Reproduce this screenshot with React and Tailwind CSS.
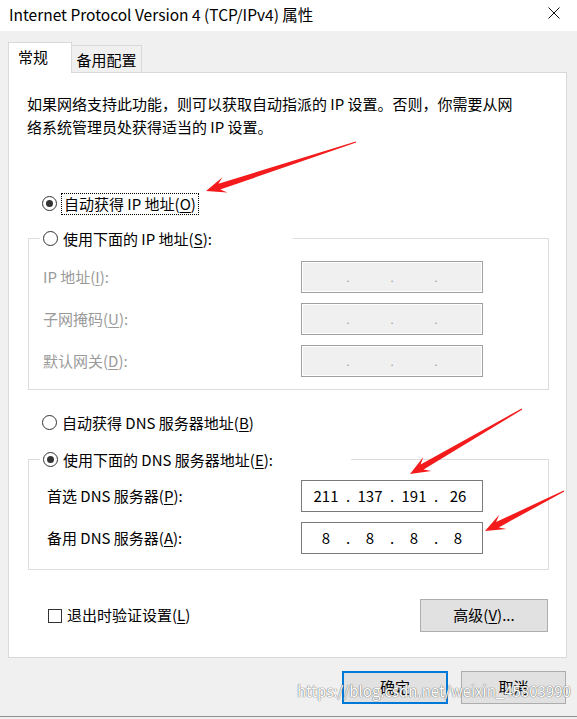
import React from "react";

const FONT = { fontFamily: '"Noto Sans CJK SC", "Noto Sans", sans-serif' };

function arrowPoints(tail, tip, headLen = 20, headHalf = 8, neckHalf = 3, tailHalf = 0.6) {
  const dx = tip[0] - tail[0];
  const dy = tip[1] - tail[1];
  const L = Math.hypot(dx, dy);
  const ux = dx / L, uy = dy / L;
  const nx = -uy, ny = ux;
  const neck = [tip[0] - ux * headLen * 0.7, tip[1] - uy * headLen * 0.7];
  const barb = [tip[0] - ux * headLen, tip[1] - uy * headLen];
  const pts = [
    [tail[0] + nx * tailHalf, tail[1] + ny * tailHalf],
    [neck[0] + nx * neckHalf, neck[1] + ny * neckHalf],
    [barb[0] + nx * headHalf, barb[1] + ny * headHalf],
    tip,
    [barb[0] - nx * headHalf, barb[1] - ny * headHalf],
    [neck[0] - nx * neckHalf, neck[1] - ny * neckHalf],
    [tail[0] - nx * tailHalf, tail[1] - ny * tailHalf],
  ];
  return pts.map((p) => p.map((v) => v.toFixed(1)).join(",")).join(" ");
}

function Radio({ checked }) {
  return (
    <span className="w-[15px] h-[15px] rounded-full border border-[#333] bg-white flex items-center justify-center shrink-0">
      {checked && <span className="w-[7px] h-[7px] rounded-full bg-[#333]" />}
    </span>
  );
}

function U({ children }) {
  return <span className="underline underline-offset-2">{children}</span>;
}

function IpBox({ values, disabled }) {
  const base = disabled
    ? "bg-[#f0f0f0] border-[#a0a0a0] shadow-[inset_0_0_0_1px_#ffffff]"
    : "bg-white border-[#7a7a7a]";
  const items = [];
  for (let i = 0; i < 4; i++) {
    items.push(
      <span key={"v" + i} className="w-[38px] text-center">
        {values ? values[i] : ""}
      </span>
    );
    if (i < 3)
      items.push(
        <span
          key={"d" + i}
          className={"w-[6px] text-center " + (disabled ? "text-[#9a9a9a] text-[11px]" : "")}
        >
          .
        </span>
      );
  }
  return (
    <div
      className={
        "w-[182px] h-[32px] border flex items-center pl-[5px] text-[15px] text-black " + base
      }
    >
      {items}
    </div>
  );
}

export default function App() {
  return (
    <div
      className="relative w-[577px] h-[719px] bg-[#f0f0f0] overflow-hidden flex flex-col text-black"
      style={FONT}
    >
      {/* Title bar */}
      <div className="h-[31px] bg-white flex items-center justify-between pl-[9px] pr-[17px] shrink-0">
        <span className="text-[15.5px] leading-[20px] -mt-[4px]">
          Internet Protocol Version 4 (TCP/IPv4) 属性
        </span>
        <svg width="12" height="12" viewBox="0 0 12 12" className="-mt-[6px]">
          <path d="M0.5 0.5 L11.5 11.5 M11.5 0.5 L0.5 11.5" stroke="#111" strokeWidth="1" />
        </svg>
      </div>

      {/* Tabs */}
      <div className="h-[41px] flex items-end pl-[8px] shrink-0">
        <div className="relative z-10 -mb-px w-[64px] h-[31px] bg-white border border-b-0 border-[#d9d9d9] pl-[9px] text-[15px] leading-[28px]">
          常规
        </div>
        <div className="w-[70px] h-[27px] bg-[#f0f0f0] border border-l-0 border-b-0 border-[#d9d9d9] text-[15px] leading-[27px] text-center">
          备用配置
        </div>
      </div>

      {/* Panel */}
      <div className="ml-[8px] w-[559px] h-[586px] bg-white border border-[#d9d9d9] shrink-0 flex flex-col">
        <p className="mt-[19px] ml-[18px] text-[15px] leading-[23px]">
          如果网络支持此功能，则可以获取自动指派的 IP 设置。否则，你需要从网
          <br />
          络系统管理员处获得适当的 IP 设置。
        </p>

        <div className="mt-[54px] ml-[33px] h-[23px] flex items-center">
          <Radio checked />
          <span className="ml-[4px] px-[2px] border border-dotted border-black text-[15px] leading-[20px]">
            自动获得 IP 地址(<U>O</U>)
          </span>
        </div>

        {/* Group 1 */}
        <div className="relative mt-[23px] ml-[19px] w-[521px] h-[152px] border border-[#dcdcdc] flex flex-col gap-[10px] pt-[22px] pl-[14px]">
          <div className="absolute -top-[12px] left-[11px] w-[253px] h-[23px] bg-white flex items-center pl-[3px]">
            <Radio />
            <span className="ml-[5px] text-[15px] leading-[20px]">
              使用下面的 IP 地址(<U>S</U>):
            </span>
          </div>
          {[
            ["IP 地址(", "I", "):"],
            ["子网掩码(", "U", "):"],
            ["默认网关(", "D", "):"],
          ].map((r) => (
            <div key={r[1]} className="flex items-center h-[32px]">
              <span className="w-[258px] text-[15px] text-[#9a9a9a]">
                {r[0]}
                <U>{r[1]}</U>
                {r[2]}
              </span>
              <IpBox disabled />
            </div>
          ))}
        </div>

        <div className="mt-[21px] ml-[33px] h-[23px] flex items-center">
          <Radio />
          <span className="ml-[5px] text-[15px] leading-[20px]">
            自动获得 DNS 服务器地址(<U>B</U>)
          </span>
        </div>

        {/* Group 2 */}
        <div className="relative mt-[25px] ml-[19px] w-[521px] h-[111px] border border-[#dcdcdc] flex flex-col gap-[10px] pt-[20px] pl-[18px]">
          <div className="absolute -top-[12px] left-[11px] w-[311px] h-[23px] bg-white flex items-center pl-[3px]">
            <Radio checked />
            <span className="ml-[5px] text-[15px] leading-[20px]">
              使用下面的 DNS 服务器地址(<U>E</U>):
            </span>
          </div>
          <div className="flex items-center h-[32px]">
            <span className="w-[254px] text-[15px]">
              首选 DNS 服务器(<U>P</U>):
            </span>
            <IpBox values={["211", "137", "191", "26"]} />
          </div>
          <div className="flex items-center h-[32px]">
            <span className="w-[254px] text-[15px]">
              备用 DNS 服务器(<U>A</U>):
            </span>
            <IpBox values={["8", "8", "8", "8"]} />
          </div>
        </div>

        <div className="mt-[29px] ml-[39px] mr-[18px] h-[33px] flex items-center justify-between">
          <div className="flex items-center">
            <span className="w-[14px] h-[14px] border border-[#333] bg-white" />
            <span className="ml-[5px] text-[15px]">
              退出时验证设置(<U>L</U>)
            </span>
          </div>
          <button className="w-[128px] h-[33px] bg-[#e1e1e1] border border-[#adadad] text-[15px]">
            高级(<U>V</U>)...
          </button>
        </div>
      </div>

      {/* Bottom buttons */}
      <div className="mt-[13px] h-[33px] flex justify-end gap-[13px] pr-[11px] shrink-0">
        <button className="w-[106px] h-[33px] bg-[#e1e1e1] border-2 border-[#0078d7] text-[15px]">
          确定
        </button>
        <button className="w-[105px] h-[33px] bg-[#e1e1e1] border border-[#adadad] text-[15px]">
          取消
        </button>
      </div>

      <div className="absolute left-0 right-0 bottom-[2px] h-px bg-[#8f8f8f]" />

      {/* Watermark */}
      <div className="absolute left-[297px] top-[681px] text-[15px] leading-[20px] text-white whitespace-nowrap [text-shadow:0_0_1px_#666,0_0_1px_#666]">
        https://blog.csdn.net/weixin_45803990
      </div>

      {/* Red arrows */}
      <svg className="absolute inset-0 pointer-events-none" width="577" height="719">
        <polygon points={arrowPoints([356, 142], [206, 191])} fill="#f31b1b" />
        <polygon points={arrowPoints([522, 409], [410, 474])} fill="#f31b1b" />
        <polygon points={arrowPoints([564, 491], [485, 531])} fill="#f31b1b" />
      </svg>
    </div>
  );
}
